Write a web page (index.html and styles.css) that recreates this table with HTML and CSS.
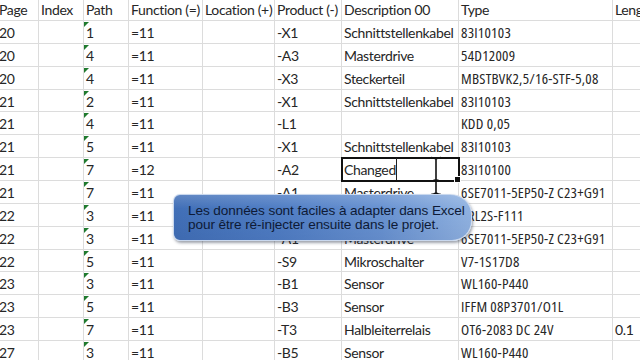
FILE: index.html
```html
<!DOCTYPE html>
<html lang="de">
<head>
<meta charset="utf-8">
<title>Sheet</title>
<link rel="stylesheet" href="styles.css">
</head>
<body>
<div class="sheet">
  <div class="grid">
    <div class="c hd pg">Page</div><div class="c hd">Index</div><div class="c hd">Path</div><div class="c hd">Function (=)</div><div class="c hd">Location (+)</div><div class="c hd">Product (-)</div><div class="c hd">Description 00</div><div class="c hd">Type</div><div class="c hd">Length</div>

    <div class="c pg">20</div><div class="c"></div><div class="c path">1</div><div class="c">=11</div><div class="c"></div><div class="c">-X1</div><div class="c">Schnittstellenkabel</div><div class="c t">83I10103</div><div class="c"></div>
    <div class="c pg">20</div><div class="c"></div><div class="c path">4</div><div class="c">=11</div><div class="c"></div><div class="c">-A3</div><div class="c">Masterdrive</div><div class="c t">54D12009</div><div class="c"></div>
    <div class="c pg">20</div><div class="c"></div><div class="c path">4</div><div class="c">=11</div><div class="c"></div><div class="c">-X3</div><div class="c">Steckerteil</div><div class="c t">MBSTBVK2,5/16-STF-5,08</div><div class="c"></div>
    <div class="c pg">21</div><div class="c"></div><div class="c path">2</div><div class="c">=11</div><div class="c"></div><div class="c">-X1</div><div class="c">Schnittstellenkabel</div><div class="c t">83I10103</div><div class="c"></div>
    <div class="c pg">21</div><div class="c"></div><div class="c path">4</div><div class="c">=11</div><div class="c"></div><div class="c">-L1</div><div class="c"></div><div class="c t">KDD 0,05</div><div class="c"></div>
    <div class="c pg">21</div><div class="c"></div><div class="c path">5</div><div class="c">=11</div><div class="c"></div><div class="c">-X1</div><div class="c">Schnittstellenkabel</div><div class="c t">83I10103</div><div class="c"></div>
    <div class="c pg">21</div><div class="c"></div><div class="c path">7</div><div class="c">=12</div><div class="c"></div><div class="c">-A2</div><div class="c sel">Changed<span class="edit"></span><span class="handle"></span></div><div class="c t">83I10100</div><div class="c"></div>
    <div class="c pg">21</div><div class="c"></div><div class="c path">7</div><div class="c">=11</div><div class="c"></div><div class="c">-A1</div><div class="c">Masterdrive</div><div class="c t">6SE7011-5EP50-Z C23+G91</div><div class="c"></div>
    <div class="c pg">22</div><div class="c"></div><div class="c path">3</div><div class="c">=11</div><div class="c"></div><div class="c">-S1</div><div class="c">Mikroschalter</div><div class="c t">3RL2S-F111</div><div class="c"></div>
    <div class="c pg">22</div><div class="c"></div><div class="c path">3</div><div class="c">=11</div><div class="c"></div><div class="c">-A1</div><div class="c">Masterdrive</div><div class="c t">6SE7011-5EP50-Z C23+G91</div><div class="c"></div>
    <div class="c pg">22</div><div class="c"></div><div class="c path">5</div><div class="c">=11</div><div class="c"></div><div class="c">-S9</div><div class="c">Mikroschalter</div><div class="c t">V7-1S17D8</div><div class="c"></div>
    <div class="c pg">23</div><div class="c"></div><div class="c path">3</div><div class="c">=11</div><div class="c"></div><div class="c">-B1</div><div class="c">Sensor</div><div class="c t">WL160-P440</div><div class="c"></div>
    <div class="c pg">23</div><div class="c"></div><div class="c path">5</div><div class="c">=11</div><div class="c"></div><div class="c">-B3</div><div class="c">Sensor</div><div class="c t">IFFM 08P3701/O1L</div><div class="c"></div>
    <div class="c pg">23</div><div class="c"></div><div class="c path">7</div><div class="c">=11</div><div class="c"></div><div class="c">-T3</div><div class="c">Halbleiterrelais</div><div class="c t">OT6-2083 DC 24V</div><div class="c">0.1</div>
    <div class="c pg">27</div><div class="c"></div><div class="c path">3</div><div class="c">=11</div><div class="c"></div><div class="c">-B5</div><div class="c">Sensor</div><div class="c t">WL160-P440</div><div class="c"></div>
  </div>

  <svg class="ibeam" width="14" height="40" viewBox="0 0 14 40" aria-hidden="true">
    <path d="M2 1.5 Q5 1.5 7 3 Q9 1.5 12 1.5 M7 3 V37 M2 38.5 Q5 38.5 7 37 Q9 38.5 12 38.5" fill="none" stroke="#111" stroke-width="1.6"/>
    <path d="M4.5 24 H9.5" stroke="#111" stroke-width="1.2"/>
  </svg>

  <div class="callout">
    <p>Les données sont faciles à adapter dans Excel<br>pour être ré-injecter ensuite dans le projet.</p>
  </div>
</div>
</body>
</html>
```

FILE: styles.css
```css
html, body {
  margin: 0;
  padding: 0;
  background: #ffffff;
}

body {
  width: 640px;
  height: 360px;
  overflow: hidden;
}

.sheet {
  position: relative;
  width: 640px;
  height: 360px;
  overflow: hidden;
}

.grid {
  display: grid;
  grid-template-columns: 45px 45px 45px 74px 72px 67px 117px 154px 80px;
  grid-template-rows: 21px repeat(15, 22.86px);
  margin-left: -6px;
  font-family: Lato, "Open Sans", sans-serif;
  font-size: 14px;
  letter-spacing: -0.35px;
  color: #262626;
}

.c {
  box-sizing: border-box;
  border-right: 1px solid #dcdcdc;
  border-bottom: 1px solid #dcdcdc;
  padding-left: 2px;
  line-height: 23px;
  white-space: nowrap;
  overflow: hidden;
  position: relative;
}

.c.t {
  font-family: "Open Sans", Lato, sans-serif;
  font-stretch: 75%;
  font-size: 15px;
  letter-spacing: 0.25px;
  overflow: visible;
  z-index: 1;
}

.hd {
  line-height: 20px;
}

.pg {
  padding-left: 5px;
}

.path::before {
  content: "";
  position: absolute;
  left: 0;
  top: 1px;
  border-top: 5px solid #1f7a2e;
  border-right: 5px solid transparent;
}

.sel {
  overflow: visible;
  z-index: 2;
  outline: 2px solid #111;
  outline-offset: -1px;
}

.sel .edit {
  position: absolute;
  left: 54px;
  top: 0;
  bottom: 0;
  border-left: 1px solid #222;
}

.sel .handle {
  position: absolute;
  right: -3px;
  bottom: -3px;
  width: 5px;
  height: 5px;
  background: #111;
  border: 1px solid #fff;
}

.ibeam {
  position: absolute;
  left: 429px;
  top: 156px;
  z-index: 3;
}

.callout {
  position: absolute;
  left: 173px;
  top: 194px;
  width: 299px;
  height: 47px;
  box-sizing: border-box;
  border: 1px solid #c9d8ee;
  border-radius: 7px 22px 20px 7px / 7px 20px 20px 7px;
  background:
    linear-gradient(180deg, rgba(255,255,255,0.16) 0%, rgba(255,255,255,0) 30%, rgba(0,0,40,0.05) 100%),
    linear-gradient(90deg, #416fb7 0%, #4f7dc4 35%, #6892d1 70%, #90b2e1 100%);
  box-shadow: 1px 2px 3px rgba(40,50,70,0.45);
  z-index: 4;
  display: flex;
  align-items: center;
  padding-left: 14px;
}

.callout p {
  margin: 0;
  font-family: "Liberation Sans", Arial, sans-serif;
  font-size: 13.6px;
  line-height: 14px;
  letter-spacing: -0.1px;
  color: #0e1a36;
}
```
